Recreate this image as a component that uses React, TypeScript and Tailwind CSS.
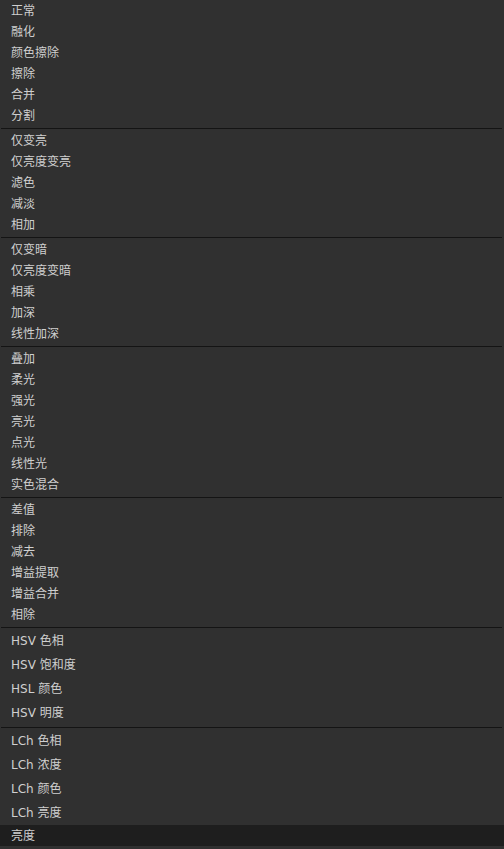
import React from 'react';

type Item = { label: string; tall?: boolean; active?: boolean };

const GROUPS: Item[][] = [
  [{ label: '正常' }, { label: '融化' }, { label: '颜色擦除' }, { label: '擦除' }, { label: '合并' }, { label: '分割' }],
  [{ label: '仅变亮' }, { label: '仅亮度变亮' }, { label: '滤色' }, { label: '减淡' }, { label: '相加' }],
  [{ label: '仅变暗' }, { label: '仅亮度变暗' }, { label: '相乘' }, { label: '加深' }, { label: '线性加深' }],
  [
    { label: '叠加' },
    { label: '柔光' },
    { label: '强光' },
    { label: '亮光' },
    { label: '点光' },
    { label: '线性光' },
    { label: '实色混合' },
  ],
  [{ label: '差值' }, { label: '排除' }, { label: '减去' }, { label: '增益提取' }, { label: '增益合并' }, { label: '相除' }],
  [
    { label: 'HSV 色相', tall: true },
    { label: 'HSV 饱和度', tall: true },
    { label: 'HSL 颜色', tall: true },
    { label: 'HSV 明度', tall: true },
  ],
  [
    { label: 'LCh 色相', tall: true },
    { label: 'LCh 浓度', tall: true },
    { label: 'LCh 颜色', tall: true },
    { label: 'LCh 亮度', tall: true },
    { label: '亮度', active: true },
  ],
];

const MenuRow: React.FC<{ item: Item }> = ({ item }) => (
  <div
    className={`flex items-center pl-[11px] text-[12px] text-[#cfcfcf] ${item.tall ? 'h-[24px]' : 'h-[21px]'} ${
      item.active ? 'bg-[#1e1e1e]' : ''
    }`}
  >
    <span className="leading-none whitespace-pre">{item.label}</span>
  </div>
);

export default function App() {
  return (
    <div
      className="w-[504px] h-[849px] bg-[#303030] overflow-hidden"
      style={{ fontFamily: '"DejaVu Sans", "Noto Sans CJK SC", sans-serif' }}
    >
      {GROUPS.map((group, gi) => (
        <div key={gi}>
          {gi > 0 && (
            <div className="h-[4px] flex items-center pl-px pr-[2px]">
              <div className="h-px w-full bg-[#141414]" />
            </div>
          )}
          {group.map((item) => (
            <MenuRow key={item.label} item={item} />
          ))}
        </div>
      ))}
    </div>
  );
}
